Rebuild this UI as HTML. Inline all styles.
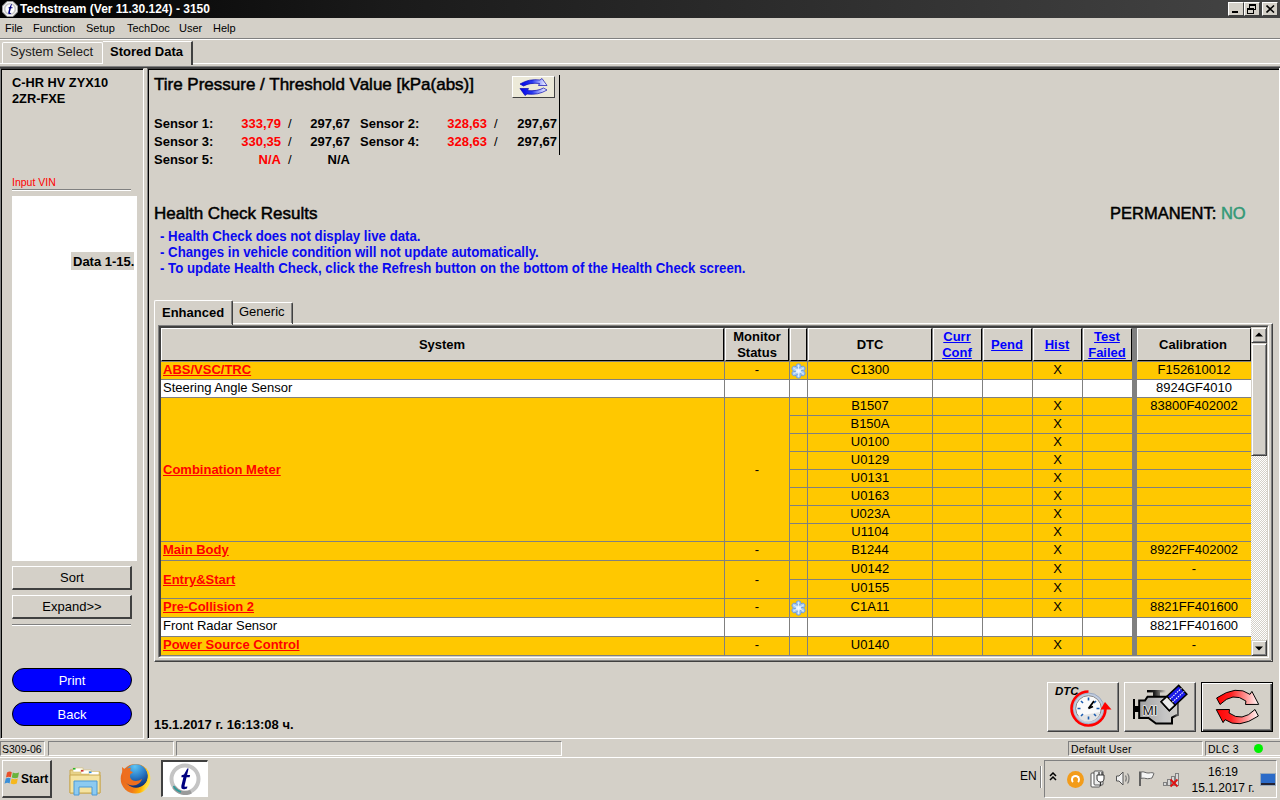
<!DOCTYPE html>
<html><head><meta charset="utf-8">
<style>
*{margin:0;padding:0;box-sizing:border-box}
html,body{width:1280px;height:800px;overflow:hidden;background:#d4d0c8;font-family:"Liberation Sans",sans-serif;color:#000}
.a{position:absolute}
.t{position:absolute;white-space:nowrap;line-height:1}
.b{font-weight:bold}
.hl{position:absolute;height:1px}
.vl{position:absolute;width:1px}
</style></head><body>
<!-- title bar -->
<div class="a" style="left:0;top:0;width:1280px;height:18px;background:linear-gradient(to right,#000 0%,#1a1a1a 30%,#444 100%)"></div>
<svg class="a" style="left:2px;top:1px" width="16" height="16" viewBox="0 0 16 16">
<path d="M5 0.5H11L15.5 5V11L11 15.5H5L0.5 11V5Z" fill="#f4f4f4" stroke="#9a9a9a" stroke-width="1"/>
<circle cx="8" cy="8" r="5.3" fill="#fff" stroke="#c8c8c8" stroke-width="1.6"/>
<path d="M9.3 3L7.7 6L6.5 6.4L6.4 7.3H7.3L6.3 11.2C6 12.7 6.7 13.2 7.8 13.1L9 12.8L9.2 11.7L8.4 11.9C7.9 12 7.8 11.7 7.9 11.2L8.9 7.3H10.4L10.6 6.2H9.1L9.9 3Z" fill="#000080"/>
</svg>
<div class="t b" style="left:20px;top:3px;font-size:12px;color:#fff">Techstream (Ver 11.30.124) - 3150</div>
<div class="a" style="left:1228px;top:2px;width:16px;height:14px;background:#d4d0c8;border-top:1px solid #fff;border-left:1px solid #fff;border-right:1px solid #404040;border-bottom:1px solid #404040"><div class="a" style="left:3px;top:8px;width:6px;height:2px;background:#000"></div></div>
<div class="a" style="left:1244px;top:2px;width:16px;height:14px;background:#d4d0c8;border-top:1px solid #fff;border-left:1px solid #fff;border-right:1px solid #404040;border-bottom:1px solid #404040"><div class="a" style="left:4px;top:1px;width:7px;height:6px;border:1px solid #000;border-top-width:2px"></div><div class="a" style="left:2px;top:5px;width:7px;height:6px;border:1px solid #000;border-top-width:2px;background:#d4d0c8"></div></div>
<div class="a" style="left:1262px;top:2px;width:16px;height:14px;background:#d4d0c8;border-top:1px solid #fff;border-left:1px solid #fff;border-right:1px solid #404040;border-bottom:1px solid #404040"><svg class="a" style="left:3px;top:2px" width="9" height="8"><path d="M0.5 0.5L8 7.5M8 0.5L0.5 7.5" stroke="#000" stroke-width="1.6"/></svg></div>
<!-- menu -->
<div class="t" style="left:5px;top:23px;font-size:11px">File</div>
<div class="t" style="left:33px;top:23px;font-size:11px">Function</div>
<div class="t" style="left:86px;top:23px;font-size:11px">Setup</div>
<div class="t" style="left:127px;top:23px;font-size:11px">TechDoc</div>
<div class="t" style="left:179px;top:23px;font-size:11px">User</div>
<div class="t" style="left:213px;top:23px;font-size:11px">Help</div>
<div class="hl" style="left:0;top:38px;width:1280px;background:#808080"></div>
<div class="hl" style="left:0;top:39px;width:1280px;background:#fff"></div>
<!-- top tabs -->
<div class="a" style="left:2px;top:42px;width:101px;height:22px;border-top:1px solid #fff;border-left:1px solid #fff;border-right:1px solid #fff;border-radius:2px 2px 0 0"></div>
<div class="t" style="left:10px;top:45px;font-size:13px;color:#202020">System Select</div>
<div class="a" style="left:103px;top:41px;width:90px;height:24px;border-top:1px solid #fff;border-right:2px solid #404040;background:#d4d0c8"></div>
<div class="t b" style="left:110px;top:45px;font-size:13px">Stored Data</div>
<div class="hl" style="left:0;top:63px;width:103px;background:#fff"></div>
<div class="hl" style="left:193px;top:63px;width:1087px;background:#fff"></div>
<div class="hl" style="left:0;top:66px;width:1280px;background:#808080"></div>
<div class="hl" style="left:0;top:67px;width:1280px;background:#404040"></div>
<!-- left panel -->
<div class="a" style="left:0;top:68px;width:144px;height:671px;border-left:1px solid #808080;border-top:1px solid #404040;border-right:1px solid #fff;border-bottom:1px solid #fff"></div><div class="a" style="left:1px;top:69px;width:142px;height:669px;border-left:1px solid #000;border-top:1px solid #000"></div>
<div class="t b" style="left:12px;top:77px;font-size:12.8px">C-HR HV ZYX10</div>
<div class="t b" style="left:12px;top:93px;font-size:12.8px">2ZR-FXE</div>
<div class="t" style="left:12px;top:177px;font-size:10.5px;color:#f00">Input VIN</div>
<div class="hl" style="left:12px;top:189px;width:119px;background:#808080"></div>
<div class="hl" style="left:12px;top:190px;width:119px;background:#fff"></div>
<div class="a" style="left:12px;top:196px;width:125px;height:365px;background:#fff"></div>
<div class="a" style="left:71px;top:252px;width:63px;height:18px;background:#d4d0c8"></div>
<div class="t b" style="left:73px;top:255px;font-size:13px">Data 1-15.</div>
<div class="a" style="left:12px;top:566px;width:120px;height:24px;border-top:1px solid #fff;border-left:1px solid #fff;border-right:2px solid #404040;border-bottom:2px solid #404040"></div>
<div class="t" style="left:12px;top:571px;width:120px;text-align:center;font-size:13px">Sort</div>
<div class="a" style="left:12px;top:595px;width:120px;height:24px;border-top:1px solid #fff;border-left:1px solid #fff;border-right:2px solid #404040;border-bottom:2px solid #404040"></div>
<div class="t" style="left:12px;top:600px;width:120px;text-align:center;font-size:13px">Expand&gt;&gt;</div>
<div class="hl" style="left:12px;top:624px;width:119px;background:#808080"></div>
<div class="hl" style="left:12px;top:625px;width:119px;background:#fff"></div>
<div class="a" style="left:12px;top:668px;width:120px;height:24px;background:#0000ff;border:1px solid #000;border-radius:12px"></div>
<div class="t" style="left:12px;top:674px;width:120px;text-align:center;font-size:13px;color:#fff">Print</div>
<div class="a" style="left:12px;top:702px;width:120px;height:24px;background:#0000ff;border:1px solid #000;border-radius:12px"></div>
<div class="t" style="left:12px;top:708px;width:120px;text-align:center;font-size:13px;color:#fff">Back</div>
<!-- main panel -->
<div class="a" style="left:147px;top:68px;width:1133px;height:671px;border-left:1px solid #808080;border-top:1px solid #404040;border-bottom:1px solid #fff"></div><div class="a" style="left:148px;top:69px;width:1131px;height:669px;border-left:1px solid #000;border-top:1px solid #000"></div>
<div class="vl" style="left:1279px;top:68px;height:671px;background:#fff"></div>

<div class="t" style="left:154px;top:76px;font-size:17px;-webkit-text-stroke:0.5px #000">Tire Pressure / Threshold Value [kPa(abs)]</div>
<div class="a" style="left:512px;top:76px;width:43px;height:22px;background:#ece9d8;border-top:1px solid #fff;border-left:1px solid #fff;border-right:1px solid #404040;border-bottom:1px solid #404040"></div>
<svg class="a" style="left:515px;top:76px" width="38" height="22" viewBox="515 76 38 22">
<defs><linearGradient id="bg1" x1="520" y1="0" x2="547" y2="0" gradientUnits="userSpaceOnUse"><stop offset="0" stop-color="#0000e8"/><stop offset="0.45" stop-color="#2838f0"/><stop offset="0.75" stop-color="#a8b0ff"/><stop offset="1" stop-color="#fff"/></linearGradient>
<linearGradient id="bg2" x1="520" y1="0" x2="547" y2="0" gradientUnits="userSpaceOnUse"><stop offset="0" stop-color="#fff"/><stop offset="0.25" stop-color="#a8b0ff"/><stop offset="0.55" stop-color="#2838f0"/><stop offset="1" stop-color="#0000e8"/></linearGradient></defs>
<path d="M520 84Q529 78.5 540 80L542 78.5L547 85.5L538.5 85.5L539.5 83.5Q530 82.5 523.5 86Z" fill="url(#bg1)" stroke="#0a0ab0" stroke-width="0.7"/>
<g transform="rotate(180 533.5 87)"><path d="M520 84Q529 78.5 540 80L542 78.5L547 85.5L538.5 85.5L539.5 83.5Q530 82.5 523.5 86Z" fill="url(#bg2)" stroke="#0a0ab0" stroke-width="0.7"/></g>
</svg>
<div class="vl" style="left:559px;top:75px;height:80px;background:#000"></div>
<div class="t b" style="left:154px;top:117px;font-size:13px">Sensor 1:</div>
<div class="t b" style="left:154px;top:135px;font-size:13px">Sensor 3:</div>
<div class="t b" style="left:154px;top:153px;font-size:13px">Sensor 5:</div>
<div class="t b" style="left:201px;width:80px;text-align:right;top:117px;font-size:13px;color:#f00">333,79</div>
<div class="t b" style="left:201px;width:80px;text-align:right;top:135px;font-size:13px;color:#f00">330,35</div>
<div class="t b" style="left:201px;width:80px;text-align:right;top:153px;font-size:13px;color:#f00">N/A</div>
<div class="t" style="left:288px;top:117px;font-size:13px">/</div>
<div class="t" style="left:288px;top:135px;font-size:13px">/</div>
<div class="t" style="left:288px;top:153px;font-size:13px">/</div>
<div class="t b" style="left:270px;width:80px;text-align:right;top:117px;font-size:13px">297,67</div>
<div class="t b" style="left:270px;width:80px;text-align:right;top:135px;font-size:13px">297,67</div>
<div class="t b" style="left:270px;width:80px;text-align:right;top:153px;font-size:13px">N/A</div>
<div class="t b" style="left:360px;top:117px;font-size:13px">Sensor 2:</div>
<div class="t b" style="left:360px;top:135px;font-size:13px">Sensor 4:</div>
<div class="t b" style="left:407px;width:80px;text-align:right;top:117px;font-size:13px;color:#f00">328,63</div>
<div class="t b" style="left:407px;width:80px;text-align:right;top:135px;font-size:13px;color:#f00">328,63</div>
<div class="t" style="left:494px;top:117px;font-size:13px">/</div>
<div class="t" style="left:494px;top:135px;font-size:13px">/</div>
<div class="t b" style="left:477px;width:80px;text-align:right;top:117px;font-size:13px">297,67</div>
<div class="t b" style="left:477px;width:80px;text-align:right;top:135px;font-size:13px">297,67</div>
<div class="t" style="left:154px;top:205px;font-size:17px;-webkit-text-stroke:0.5px #000">Health Check Results</div>
<div class="t" style="left:1110px;top:205px;font-size:16.5px;-webkit-text-stroke:0.5px #000">PERMANENT: <span style="color:#339977;-webkit-text-stroke:0.5px #339977">NO</span></div>
<div class="t b" style="left:160px;top:228px;font-size:15px;color:#0a0af0;transform:scaleX(0.883);transform-origin:0 0">- Health Check does not display live data.</div>
<div class="t b" style="left:160px;top:244px;font-size:15px;color:#0a0af0;transform:scaleX(0.883);transform-origin:0 0">- Changes in vehicle condition will not update automatically.</div>
<div class="t b" style="left:160px;top:260px;font-size:15px;color:#0a0af0;transform:scaleX(0.883);transform-origin:0 0">- To update Health Check, click the Refresh button on the bottom of the Health Check screen.</div>
<!--TABLE-->
<div class="a" style="left:154px;top:323px;width:1119px;height:339px;border-left:1px solid #fff;border-top:1px solid #fff;border-right:1px solid #404040;border-bottom:1px solid #404040"></div>
<div class="vl" style="left:1271px;top:324px;height:336px;background:#808080"></div>
<div class="hl" style="left:155px;top:660px;width:1116px;background:#808080"></div>
<div class="a" style="left:154px;top:300px;width:79px;height:25px;background:#d4d0c8;border-left:1px solid #fff;border-top:1px solid #fff;border-right:1px solid #404040;border-radius:2px 2px 0 0"></div>
<div class="vl" style="left:231px;top:301px;height:23px;background:#808080"></div>
<div class="t b" style="left:162px;top:306px;font-size:13px">Enhanced</div>
<div class="a" style="left:233px;top:302px;width:60px;height:22px;border-top:1px solid #fff;border-right:1px solid #404040;border-radius:0 2px 0 0"></div>
<div class="vl" style="left:291px;top:303px;height:20px;background:#808080"></div>
<div class="t" style="left:239px;top:305px;font-size:13px">Generic</div>
<div class="a" style="left:158px;top:325px;width:1111px;height:333px;border-left:1px solid #808080;border-top:1px solid #808080;border-right:1px solid #fff;border-bottom:1px solid #fff"></div>
<div class="a" style="left:159px;top:326px;width:1109px;height:331px;border-left:2px solid #404040;border-top:2px solid #404040;border-right:1px solid #d4d0c8;border-bottom:1px solid #d4d0c8"></div>
<div class="a" style="left:161px;top:328px;width:1090px;height:328px;background:#808080"></div>
<div class="a" style="left:161px;top:328px;width:563px;height:33px;background:#d4d0c8;border-left:1px solid #fff;border-top:1px solid #fff;border-right:1px solid #000;border-bottom:1px solid #000"></div>
<div class="a" style="left:725px;top:328px;width:64px;height:33px;background:#d4d0c8;border-left:1px solid #fff;border-top:1px solid #fff;border-right:1px solid #000;border-bottom:1px solid #000"></div>
<div class="a" style="left:790px;top:328px;width:17px;height:33px;background:#d4d0c8;border-left:1px solid #fff;border-top:1px solid #fff;border-right:1px solid #000;border-bottom:1px solid #000"></div>
<div class="a" style="left:808px;top:328px;width:124px;height:33px;background:#d4d0c8;border-left:1px solid #fff;border-top:1px solid #fff;border-right:1px solid #000;border-bottom:1px solid #000"></div>
<div class="a" style="left:933px;top:328px;width:49px;height:33px;background:#d4d0c8;border-left:1px solid #fff;border-top:1px solid #fff;border-right:1px solid #000;border-bottom:1px solid #000"></div>
<div class="a" style="left:983px;top:328px;width:49px;height:33px;background:#d4d0c8;border-left:1px solid #fff;border-top:1px solid #fff;border-right:1px solid #000;border-bottom:1px solid #000"></div>
<div class="a" style="left:1033px;top:328px;width:49px;height:33px;background:#d4d0c8;border-left:1px solid #fff;border-top:1px solid #fff;border-right:1px solid #000;border-bottom:1px solid #000"></div>
<div class="a" style="left:1083px;top:328px;width:49px;height:33px;background:#d4d0c8;border-left:1px solid #fff;border-top:1px solid #fff;border-right:1px solid #000;border-bottom:1px solid #000"></div>
<div class="a" style="left:1137px;top:328px;width:114px;height:33px;background:#d4d0c8;border-left:1px solid #fff;border-top:1px solid #fff;border-right:1px solid #000;border-bottom:1px solid #000"></div>
<div class="a" style="left:1132px;top:328px;width:4px;height:327px;background:#808080"></div>
<div class="t b" style="left:382px;width:120px;text-align:center;top:338px;font-size:13px;">System</div>
<div class="t b" style="left:697px;width:120px;text-align:center;top:330px;font-size:13px;">Monitor</div>
<div class="t b" style="left:697px;width:120px;text-align:center;top:346px;font-size:13px;">Status</div>
<div class="t b" style="left:810px;width:120px;text-align:center;top:338px;font-size:13px;">DTC</div>
<div class="t b" style="left:897px;width:120px;text-align:center;top:330px;font-size:13px;color:#0000ff;text-decoration:underline;">Curr</div>
<div class="t b" style="left:897px;width:120px;text-align:center;top:346px;font-size:13px;color:#0000ff;text-decoration:underline;">Conf</div>
<div class="t b" style="left:947px;width:120px;text-align:center;top:338px;font-size:13px;color:#0000ff;text-decoration:underline;">Pend</div>
<div class="t b" style="left:997px;width:120px;text-align:center;top:338px;font-size:13px;color:#0000ff;text-decoration:underline;">Hist</div>
<div class="t b" style="left:1047px;width:120px;text-align:center;top:330px;font-size:13px;color:#0000ff;text-decoration:underline;">Test</div>
<div class="t b" style="left:1047px;width:120px;text-align:center;top:346px;font-size:13px;color:#0000ff;text-decoration:underline;">Failed</div>
<div class="t b" style="left:1133px;width:120px;text-align:center;top:338px;font-size:13px;">Calibration</div>
<div class="a" style="left:161px;top:362px;width:563px;height:17px;background:#ffc800"></div>
<div class="a" style="left:725px;top:362px;width:64px;height:17px;background:#ffc800"></div>
<div class="t b" style="left:163px;top:363px;font-size:13px;color:#f00;text-decoration:underline">ABS/VSC/TRC</div>
<div class="t" style="left:725px;width:64px;text-align:center;top:363px;font-size:13px">-</div>
<div class="a" style="left:161px;top:380px;width:563px;height:17px;background:#ffffff"></div>
<div class="a" style="left:725px;top:380px;width:64px;height:17px;background:#ffffff"></div>
<div class="t" style="left:163px;top:381px;font-size:13px">Steering Angle Sensor</div>
<div class="a" style="left:161px;top:398px;width:563px;height:143px;background:#ffc800"></div>
<div class="a" style="left:725px;top:398px;width:64px;height:143px;background:#ffc800"></div>
<div class="t b" style="left:163px;top:463px;font-size:13px;color:#f00;text-decoration:underline">Combination Meter</div>
<div class="t" style="left:725px;width:64px;text-align:center;top:463px;font-size:13px">-</div>
<div class="a" style="left:161px;top:542px;width:563px;height:18px;background:#ffc800"></div>
<div class="a" style="left:725px;top:542px;width:64px;height:18px;background:#ffc800"></div>
<div class="t b" style="left:163px;top:543px;font-size:13px;color:#f00;text-decoration:underline">Main Body</div>
<div class="t" style="left:725px;width:64px;text-align:center;top:543px;font-size:13px">-</div>
<div class="a" style="left:161px;top:561px;width:563px;height:37px;background:#ffc800"></div>
<div class="a" style="left:725px;top:561px;width:64px;height:37px;background:#ffc800"></div>
<div class="t b" style="left:163px;top:573px;font-size:13px;color:#f00;text-decoration:underline">Entry&amp;Start</div>
<div class="t" style="left:725px;width:64px;text-align:center;top:573px;font-size:13px">-</div>
<div class="a" style="left:161px;top:599px;width:563px;height:18px;background:#ffc800"></div>
<div class="a" style="left:725px;top:599px;width:64px;height:18px;background:#ffc800"></div>
<div class="t b" style="left:163px;top:600px;font-size:13px;color:#f00;text-decoration:underline">Pre-Collision 2</div>
<div class="t" style="left:725px;width:64px;text-align:center;top:600px;font-size:13px">-</div>
<div class="a" style="left:161px;top:618px;width:563px;height:18px;background:#ffffff"></div>
<div class="a" style="left:725px;top:618px;width:64px;height:18px;background:#ffffff"></div>
<div class="t" style="left:163px;top:619px;font-size:13px">Front Radar Sensor</div>
<div class="a" style="left:161px;top:637px;width:563px;height:18px;background:#ffc800"></div>
<div class="a" style="left:725px;top:637px;width:64px;height:18px;background:#ffc800"></div>
<div class="t b" style="left:163px;top:638px;font-size:13px;color:#f00;text-decoration:underline">Power Source Control</div>
<div class="t" style="left:725px;width:64px;text-align:center;top:638px;font-size:13px">-</div>
<div class="a" style="left:790px;top:362px;width:17px;height:17px;background:#ffc800"></div>
<div class="a" style="left:808px;top:362px;width:124px;height:17px;background:#ffc800"></div>
<div class="a" style="left:933px;top:362px;width:49px;height:17px;background:#ffc800"></div>
<div class="a" style="left:983px;top:362px;width:49px;height:17px;background:#ffc800"></div>
<div class="a" style="left:1033px;top:362px;width:49px;height:17px;background:#ffc800"></div>
<div class="a" style="left:1083px;top:362px;width:49px;height:17px;background:#ffc800"></div>
<div class="a" style="left:1137px;top:362px;width:114px;height:17px;background:#ffc800"></div>
<div class="t" style="left:808px;width:124px;text-align:center;top:363px;font-size:13px">C1300</div>
<div class="t" style="left:1033px;width:49px;text-align:center;top:363px;font-size:13px">X</div>
<div class="t" style="left:1137px;width:114px;text-align:center;top:363px;font-size:13px">F152610012</div>
<svg class="a" style="left:790px;top:363px" width="17" height="16" viewBox="0 0 17 16"><g fill="#a8cdf4" stroke="#6a96d8" stroke-width="0.8"><ellipse cx="8.5" cy="4" rx="2.6" ry="3.3" transform="rotate(0 8.5 8)"/><ellipse cx="8.5" cy="4" rx="2.6" ry="3.3" transform="rotate(60 8.5 8)"/><ellipse cx="8.5" cy="4" rx="2.6" ry="3.3" transform="rotate(120 8.5 8)"/><ellipse cx="8.5" cy="4" rx="2.6" ry="3.3" transform="rotate(180 8.5 8)"/><ellipse cx="8.5" cy="4" rx="2.6" ry="3.3" transform="rotate(240 8.5 8)"/><ellipse cx="8.5" cy="4" rx="2.6" ry="3.3" transform="rotate(300 8.5 8)"/></g><circle cx="8.5" cy="8" r="2.6" fill="#d8ecff"/><g stroke="#fff" stroke-width="0.8" opacity="0.8"><path d="M8.5 2V14M3.3 5L13.7 11M3.3 11L13.7 5"/></g></svg>
<div class="a" style="left:790px;top:380px;width:17px;height:17px;background:#ffffff"></div>
<div class="a" style="left:808px;top:380px;width:124px;height:17px;background:#ffffff"></div>
<div class="a" style="left:933px;top:380px;width:49px;height:17px;background:#ffffff"></div>
<div class="a" style="left:983px;top:380px;width:49px;height:17px;background:#ffffff"></div>
<div class="a" style="left:1033px;top:380px;width:49px;height:17px;background:#ffffff"></div>
<div class="a" style="left:1083px;top:380px;width:49px;height:17px;background:#ffffff"></div>
<div class="a" style="left:1137px;top:380px;width:114px;height:17px;background:#ffffff"></div>
<div class="t" style="left:1137px;width:114px;text-align:center;top:381px;font-size:13px">8924GF4010</div>
<div class="a" style="left:790px;top:398px;width:17px;height:17px;background:#ffc800"></div>
<div class="a" style="left:808px;top:398px;width:124px;height:17px;background:#ffc800"></div>
<div class="a" style="left:933px;top:398px;width:49px;height:17px;background:#ffc800"></div>
<div class="a" style="left:983px;top:398px;width:49px;height:17px;background:#ffc800"></div>
<div class="a" style="left:1033px;top:398px;width:49px;height:17px;background:#ffc800"></div>
<div class="a" style="left:1083px;top:398px;width:49px;height:17px;background:#ffc800"></div>
<div class="a" style="left:1137px;top:398px;width:114px;height:17px;background:#ffc800"></div>
<div class="t" style="left:808px;width:124px;text-align:center;top:399px;font-size:13px">B1507</div>
<div class="t" style="left:1033px;width:49px;text-align:center;top:399px;font-size:13px">X</div>
<div class="t" style="left:1137px;width:114px;text-align:center;top:399px;font-size:13px">83800F402002</div>
<div class="a" style="left:790px;top:416px;width:17px;height:17px;background:#ffc800"></div>
<div class="a" style="left:808px;top:416px;width:124px;height:17px;background:#ffc800"></div>
<div class="a" style="left:933px;top:416px;width:49px;height:17px;background:#ffc800"></div>
<div class="a" style="left:983px;top:416px;width:49px;height:17px;background:#ffc800"></div>
<div class="a" style="left:1033px;top:416px;width:49px;height:17px;background:#ffc800"></div>
<div class="a" style="left:1083px;top:416px;width:49px;height:17px;background:#ffc800"></div>
<div class="a" style="left:1137px;top:416px;width:114px;height:17px;background:#ffc800"></div>
<div class="t" style="left:808px;width:124px;text-align:center;top:417px;font-size:13px">B150A</div>
<div class="t" style="left:1033px;width:49px;text-align:center;top:417px;font-size:13px">X</div>
<div class="a" style="left:790px;top:434px;width:17px;height:17px;background:#ffc800"></div>
<div class="a" style="left:808px;top:434px;width:124px;height:17px;background:#ffc800"></div>
<div class="a" style="left:933px;top:434px;width:49px;height:17px;background:#ffc800"></div>
<div class="a" style="left:983px;top:434px;width:49px;height:17px;background:#ffc800"></div>
<div class="a" style="left:1033px;top:434px;width:49px;height:17px;background:#ffc800"></div>
<div class="a" style="left:1083px;top:434px;width:49px;height:17px;background:#ffc800"></div>
<div class="a" style="left:1137px;top:434px;width:114px;height:17px;background:#ffc800"></div>
<div class="t" style="left:808px;width:124px;text-align:center;top:435px;font-size:13px">U0100</div>
<div class="t" style="left:1033px;width:49px;text-align:center;top:435px;font-size:13px">X</div>
<div class="a" style="left:790px;top:452px;width:17px;height:17px;background:#ffc800"></div>
<div class="a" style="left:808px;top:452px;width:124px;height:17px;background:#ffc800"></div>
<div class="a" style="left:933px;top:452px;width:49px;height:17px;background:#ffc800"></div>
<div class="a" style="left:983px;top:452px;width:49px;height:17px;background:#ffc800"></div>
<div class="a" style="left:1033px;top:452px;width:49px;height:17px;background:#ffc800"></div>
<div class="a" style="left:1083px;top:452px;width:49px;height:17px;background:#ffc800"></div>
<div class="a" style="left:1137px;top:452px;width:114px;height:17px;background:#ffc800"></div>
<div class="t" style="left:808px;width:124px;text-align:center;top:453px;font-size:13px">U0129</div>
<div class="t" style="left:1033px;width:49px;text-align:center;top:453px;font-size:13px">X</div>
<div class="a" style="left:790px;top:470px;width:17px;height:17px;background:#ffc800"></div>
<div class="a" style="left:808px;top:470px;width:124px;height:17px;background:#ffc800"></div>
<div class="a" style="left:933px;top:470px;width:49px;height:17px;background:#ffc800"></div>
<div class="a" style="left:983px;top:470px;width:49px;height:17px;background:#ffc800"></div>
<div class="a" style="left:1033px;top:470px;width:49px;height:17px;background:#ffc800"></div>
<div class="a" style="left:1083px;top:470px;width:49px;height:17px;background:#ffc800"></div>
<div class="a" style="left:1137px;top:470px;width:114px;height:17px;background:#ffc800"></div>
<div class="t" style="left:808px;width:124px;text-align:center;top:471px;font-size:13px">U0131</div>
<div class="t" style="left:1033px;width:49px;text-align:center;top:471px;font-size:13px">X</div>
<div class="a" style="left:790px;top:488px;width:17px;height:17px;background:#ffc800"></div>
<div class="a" style="left:808px;top:488px;width:124px;height:17px;background:#ffc800"></div>
<div class="a" style="left:933px;top:488px;width:49px;height:17px;background:#ffc800"></div>
<div class="a" style="left:983px;top:488px;width:49px;height:17px;background:#ffc800"></div>
<div class="a" style="left:1033px;top:488px;width:49px;height:17px;background:#ffc800"></div>
<div class="a" style="left:1083px;top:488px;width:49px;height:17px;background:#ffc800"></div>
<div class="a" style="left:1137px;top:488px;width:114px;height:17px;background:#ffc800"></div>
<div class="t" style="left:808px;width:124px;text-align:center;top:489px;font-size:13px">U0163</div>
<div class="t" style="left:1033px;width:49px;text-align:center;top:489px;font-size:13px">X</div>
<div class="a" style="left:790px;top:506px;width:17px;height:17px;background:#ffc800"></div>
<div class="a" style="left:808px;top:506px;width:124px;height:17px;background:#ffc800"></div>
<div class="a" style="left:933px;top:506px;width:49px;height:17px;background:#ffc800"></div>
<div class="a" style="left:983px;top:506px;width:49px;height:17px;background:#ffc800"></div>
<div class="a" style="left:1033px;top:506px;width:49px;height:17px;background:#ffc800"></div>
<div class="a" style="left:1083px;top:506px;width:49px;height:17px;background:#ffc800"></div>
<div class="a" style="left:1137px;top:506px;width:114px;height:17px;background:#ffc800"></div>
<div class="t" style="left:808px;width:124px;text-align:center;top:507px;font-size:13px">U023A</div>
<div class="t" style="left:1033px;width:49px;text-align:center;top:507px;font-size:13px">X</div>
<div class="a" style="left:790px;top:524px;width:17px;height:17px;background:#ffc800"></div>
<div class="a" style="left:808px;top:524px;width:124px;height:17px;background:#ffc800"></div>
<div class="a" style="left:933px;top:524px;width:49px;height:17px;background:#ffc800"></div>
<div class="a" style="left:983px;top:524px;width:49px;height:17px;background:#ffc800"></div>
<div class="a" style="left:1033px;top:524px;width:49px;height:17px;background:#ffc800"></div>
<div class="a" style="left:1083px;top:524px;width:49px;height:17px;background:#ffc800"></div>
<div class="a" style="left:1137px;top:524px;width:114px;height:17px;background:#ffc800"></div>
<div class="t" style="left:808px;width:124px;text-align:center;top:525px;font-size:13px">U1104</div>
<div class="t" style="left:1033px;width:49px;text-align:center;top:525px;font-size:13px">X</div>
<div class="a" style="left:790px;top:542px;width:17px;height:18px;background:#ffc800"></div>
<div class="a" style="left:808px;top:542px;width:124px;height:18px;background:#ffc800"></div>
<div class="a" style="left:933px;top:542px;width:49px;height:18px;background:#ffc800"></div>
<div class="a" style="left:983px;top:542px;width:49px;height:18px;background:#ffc800"></div>
<div class="a" style="left:1033px;top:542px;width:49px;height:18px;background:#ffc800"></div>
<div class="a" style="left:1083px;top:542px;width:49px;height:18px;background:#ffc800"></div>
<div class="a" style="left:1137px;top:542px;width:114px;height:18px;background:#ffc800"></div>
<div class="t" style="left:808px;width:124px;text-align:center;top:543px;font-size:13px">B1244</div>
<div class="t" style="left:1033px;width:49px;text-align:center;top:543px;font-size:13px">X</div>
<div class="t" style="left:1137px;width:114px;text-align:center;top:543px;font-size:13px">8922FF402002</div>
<div class="a" style="left:790px;top:561px;width:17px;height:18px;background:#ffc800"></div>
<div class="a" style="left:808px;top:561px;width:124px;height:18px;background:#ffc800"></div>
<div class="a" style="left:933px;top:561px;width:49px;height:18px;background:#ffc800"></div>
<div class="a" style="left:983px;top:561px;width:49px;height:18px;background:#ffc800"></div>
<div class="a" style="left:1033px;top:561px;width:49px;height:18px;background:#ffc800"></div>
<div class="a" style="left:1083px;top:561px;width:49px;height:18px;background:#ffc800"></div>
<div class="a" style="left:1137px;top:561px;width:114px;height:18px;background:#ffc800"></div>
<div class="t" style="left:808px;width:124px;text-align:center;top:562px;font-size:13px">U0142</div>
<div class="t" style="left:1033px;width:49px;text-align:center;top:562px;font-size:13px">X</div>
<div class="t" style="left:1137px;width:114px;text-align:center;top:562px;font-size:13px">-</div>
<div class="a" style="left:790px;top:580px;width:17px;height:18px;background:#ffc800"></div>
<div class="a" style="left:808px;top:580px;width:124px;height:18px;background:#ffc800"></div>
<div class="a" style="left:933px;top:580px;width:49px;height:18px;background:#ffc800"></div>
<div class="a" style="left:983px;top:580px;width:49px;height:18px;background:#ffc800"></div>
<div class="a" style="left:1033px;top:580px;width:49px;height:18px;background:#ffc800"></div>
<div class="a" style="left:1083px;top:580px;width:49px;height:18px;background:#ffc800"></div>
<div class="a" style="left:1137px;top:580px;width:114px;height:18px;background:#ffc800"></div>
<div class="t" style="left:808px;width:124px;text-align:center;top:581px;font-size:13px">U0155</div>
<div class="t" style="left:1033px;width:49px;text-align:center;top:581px;font-size:13px">X</div>
<div class="a" style="left:790px;top:599px;width:17px;height:18px;background:#ffc800"></div>
<div class="a" style="left:808px;top:599px;width:124px;height:18px;background:#ffc800"></div>
<div class="a" style="left:933px;top:599px;width:49px;height:18px;background:#ffc800"></div>
<div class="a" style="left:983px;top:599px;width:49px;height:18px;background:#ffc800"></div>
<div class="a" style="left:1033px;top:599px;width:49px;height:18px;background:#ffc800"></div>
<div class="a" style="left:1083px;top:599px;width:49px;height:18px;background:#ffc800"></div>
<div class="a" style="left:1137px;top:599px;width:114px;height:18px;background:#ffc800"></div>
<div class="t" style="left:808px;width:124px;text-align:center;top:600px;font-size:13px">C1A11</div>
<div class="t" style="left:1033px;width:49px;text-align:center;top:600px;font-size:13px">X</div>
<div class="t" style="left:1137px;width:114px;text-align:center;top:600px;font-size:13px">8821FF401600</div>
<svg class="a" style="left:790px;top:600px" width="17" height="16" viewBox="0 0 17 16"><g fill="#a8cdf4" stroke="#6a96d8" stroke-width="0.8"><ellipse cx="8.5" cy="4" rx="2.6" ry="3.3" transform="rotate(0 8.5 8)"/><ellipse cx="8.5" cy="4" rx="2.6" ry="3.3" transform="rotate(60 8.5 8)"/><ellipse cx="8.5" cy="4" rx="2.6" ry="3.3" transform="rotate(120 8.5 8)"/><ellipse cx="8.5" cy="4" rx="2.6" ry="3.3" transform="rotate(180 8.5 8)"/><ellipse cx="8.5" cy="4" rx="2.6" ry="3.3" transform="rotate(240 8.5 8)"/><ellipse cx="8.5" cy="4" rx="2.6" ry="3.3" transform="rotate(300 8.5 8)"/></g><circle cx="8.5" cy="8" r="2.6" fill="#d8ecff"/><g stroke="#fff" stroke-width="0.8" opacity="0.8"><path d="M8.5 2V14M3.3 5L13.7 11M3.3 11L13.7 5"/></g></svg>
<div class="a" style="left:790px;top:618px;width:17px;height:18px;background:#ffffff"></div>
<div class="a" style="left:808px;top:618px;width:124px;height:18px;background:#ffffff"></div>
<div class="a" style="left:933px;top:618px;width:49px;height:18px;background:#ffffff"></div>
<div class="a" style="left:983px;top:618px;width:49px;height:18px;background:#ffffff"></div>
<div class="a" style="left:1033px;top:618px;width:49px;height:18px;background:#ffffff"></div>
<div class="a" style="left:1083px;top:618px;width:49px;height:18px;background:#ffffff"></div>
<div class="a" style="left:1137px;top:618px;width:114px;height:18px;background:#ffffff"></div>
<div class="t" style="left:1137px;width:114px;text-align:center;top:619px;font-size:13px">8821FF401600</div>
<div class="a" style="left:790px;top:637px;width:17px;height:18px;background:#ffc800"></div>
<div class="a" style="left:808px;top:637px;width:124px;height:18px;background:#ffc800"></div>
<div class="a" style="left:933px;top:637px;width:49px;height:18px;background:#ffc800"></div>
<div class="a" style="left:983px;top:637px;width:49px;height:18px;background:#ffc800"></div>
<div class="a" style="left:1033px;top:637px;width:49px;height:18px;background:#ffc800"></div>
<div class="a" style="left:1083px;top:637px;width:49px;height:18px;background:#ffc800"></div>
<div class="a" style="left:1137px;top:637px;width:114px;height:18px;background:#ffc800"></div>
<div class="t" style="left:808px;width:124px;text-align:center;top:638px;font-size:13px">U0140</div>
<div class="t" style="left:1033px;width:49px;text-align:center;top:638px;font-size:13px">X</div>
<div class="t" style="left:1137px;width:114px;text-align:center;top:638px;font-size:13px">-</div>
<div class="a" style="left:1251px;top:328px;width:16px;height:328px;background-color:#e8e6e0;background-image:repeating-conic-gradient(#fff 0 25%,#d4d0c8 0 50%);background-size:2px 2px"></div>
<div class="a" style="left:1251px;top:327px;width:16px;height:16px;background:#d4d0c8;border-top:1px solid #d4d0c8;border-left:1px solid #d4d0c8;border-right:1px solid #404040;border-bottom:1px solid #404040;box-shadow:inset 1px 1px 0 #fff,inset -1px -1px 0 #808080"></div>
<svg class="a" style="left:1255px;top:332px" width="8" height="5"><path d="M0 4.5L4 0.5L8 4.5Z" fill="#000"/></svg>
<div class="a" style="left:1251px;top:343px;width:16px;height:113px;background:#d4d0c8;border-top:1px solid #d4d0c8;border-left:1px solid #d4d0c8;border-right:1px solid #404040;border-bottom:1px solid #404040;box-shadow:inset 1px 1px 0 #fff,inset -1px -1px 0 #808080"></div>
<div class="a" style="left:1251px;top:640px;width:16px;height:16px;background:#d4d0c8;border-top:1px solid #d4d0c8;border-left:1px solid #d4d0c8;border-right:1px solid #404040;border-bottom:1px solid #404040;box-shadow:inset 1px 1px 0 #fff,inset -1px -1px 0 #808080"></div>
<svg class="a" style="left:1255px;top:646px" width="8" height="5"><path d="M0 0.5L4 4.5L8 0.5Z" fill="#000"/></svg>
<!--/TABLE-->
<!--BTN-->
<div class="a" style="left:1047px;top:682px;width:72px;height:50px;background:#d4d0c8;border-top:1px solid #fff;border-left:1px solid #fff;border-right:1px solid #404040;border-bottom:1px solid #404040;box-shadow:inset -1px -1px 0 #808080"></div>
<div class="t b" style="left:1055px;top:686px;font-size:11.5px;font-style:italic">DTC</div>
<svg class="a" style="left:1068px;top:688px" width="46" height="42" viewBox="1068 688 46 42">
<circle cx="1088.5" cy="708.5" r="15.5" fill="#c0cce0" stroke="#9aa8c0" stroke-width="1"/>
<circle cx="1088.5" cy="708.5" r="12.8" fill="#fafafa" stroke="#888" stroke-width="1"/>
<path d="M1078 716A12 12 0 0 0 1100 712Z" fill="#e4e4e4"/>
<g stroke="#1a5cb0" stroke-width="1.6">
<path d="M1088.5 697.5V700.5M1088.5 716.5V719.5M1077.5 708.5H1080.5M1096.5 708.5H1099.5M1081 701L1083 703M1094 714L1096 716M1096 701L1094 703M1081 716L1083 714"/>
</g>
<path d="M1088.5 708.5L1094 701M1088.5 708.5L1093 706.5" stroke="#000" stroke-width="1.8"/>
<path d="M1088.5 691.5A17 17 0 1 0 1105.5 709" fill="none" stroke="#f00" stroke-width="2.6"/>
<path d="M1100.5 709.5L1111.5 709.5L1105 702Z" fill="#f00"/>
</svg>
<div class="a" style="left:1124px;top:682px;width:72px;height:50px;background:#d4d0c8;border-top:1px solid #fff;border-left:1px solid #fff;border-right:1px solid #404040;border-bottom:1px solid #404040;box-shadow:inset -1px -1px 0 #808080"></div>
<svg class="a" style="left:1130px;top:684px" width="62" height="44" viewBox="1130 684 62 44">
<defs><linearGradient id="eg" x1="1139" y1="0" x2="1185" y2="0" gradientUnits="userSpaceOnUse"><stop offset="0" stop-color="#a0a0a0"/><stop offset="0.55" stop-color="#c4c4c4"/><stop offset="1" stop-color="#d4d0c8"/></linearGradient>
<linearGradient id="pg" x1="1147" y1="0" x2="1166" y2="0" gradientUnits="userSpaceOnUse"><stop offset="0" stop-color="#000"/><stop offset="0.4" stop-color="#222"/><stop offset="1" stop-color="#d4d0c8"/></linearGradient>
<linearGradient id="og" x1="1139" y1="0" x2="1184" y2="0" gradientUnits="userSpaceOnUse"><stop offset="0" stop-color="#000"/><stop offset="0.75" stop-color="#000"/><stop offset="1" stop-color="#bbb"/></linearGradient></defs>
<rect x="1147" y="690" width="19" height="2.4" fill="url(#pg)"/>
<rect x="1153" y="692" width="7" height="4.5" fill="url(#pg)"/>
<rect x="1133" y="699" width="2" height="20" fill="#000"/>
<rect x="1135" y="706" width="4" height="6" fill="#000"/>
<path d="M1139.2 700.5H1145L1147.5 696.8H1166L1172 700H1178V715L1176 715.5L1172 717.5V723.5H1156L1148.5 718H1139.2Z" fill="url(#eg)" stroke="url(#og)" stroke-width="2"/>
<text x="1142.5" y="714.5" font-family="Liberation Sans" font-size="13.5" fill="#111" stroke="#fff" stroke-width="1.2" paint-order="stroke">MI</text>
<g transform="translate(1 0) rotate(-43 1173 698)">
<rect x="1161" y="692" width="24" height="12" fill="#1a1ae8" stroke="#000" stroke-width="1.5"/>
<rect x="1161" y="692" width="8" height="12" fill="#eaeaea" stroke="#000" stroke-width="1.5"/>
<path d="M1169 696H1185M1169 700H1185" stroke="#fff" stroke-width="1.1" stroke-dasharray="1.5 1"/>
</g>
</svg>
<div class="a" style="left:1201px;top:682px;width:72px;height:50px;background:#d4d0c8;border:1px solid #000;box-shadow:inset 1px 1px 0 #fff,inset -1px -1px 0 #404040,inset -2px -2px 0 #808080"></div>
<svg class="a" style="left:1212px;top:686px" width="52" height="42" viewBox="1212 686 52 42">
<defs><linearGradient id="rg" x1="1216" y1="0" x2="1259" y2="0" gradientUnits="userSpaceOnUse"><stop offset="0" stop-color="#f00"/><stop offset="0.35" stop-color="#ff2020"/><stop offset="1" stop-color="#fff"/></linearGradient></defs>
<path d="M1216.6 698Q1236.7 684.4 1250 694.4L1251.9 691.4L1258.7 704.4L1245.5 704.5L1245.9 701Q1233 691.3 1220 704.5Z" fill="url(#rg)" stroke="#000" stroke-width="1"/>
<g transform="rotate(180 1237.5 707)"><defs><linearGradient id="rg2" x1="1216" y1="0" x2="1259" y2="0" gradientUnits="userSpaceOnUse"><stop offset="0" stop-color="#fff"/><stop offset="0.65" stop-color="#ff2020"/><stop offset="1" stop-color="#f00"/></linearGradient></defs>
<path d="M1216.6 698Q1236.7 684.4 1250 694.4L1251.9 691.4L1258.7 704.4L1245.5 704.5L1245.9 701Q1233 691.3 1220 704.5Z" fill="url(#rg2)" stroke="#000" stroke-width="1"/></g>
</svg>

<!--/BTN-->
<div class="t b" style="left:154px;top:718px;font-size:13px">15.1.2017 г. 16:13:08 ч.</div>

<!-- status bar -->
<div class="a" style="left:0px;top:741px;width:45px;height:15px;border-top:1px solid #808080;border-left:1px solid #808080;border-right:1px solid #fff;border-bottom:1px solid #fff"></div>
<div class="t" style="left:2px;top:744px;font-size:10.5px">S309-06</div>
<div class="a" style="left:48px;top:741px;width:126px;height:15px;border-top:1px solid #808080;border-left:1px solid #808080;border-right:1px solid #fff;border-bottom:1px solid #fff"></div>
<div class="a" style="left:176px;top:741px;width:386px;height:15px;border-top:1px solid #808080;border-left:1px solid #808080;border-right:1px solid #fff;border-bottom:1px solid #fff"></div>
<div class="a" style="left:1068px;top:741px;width:135px;height:15px;border-top:1px solid #808080;border-left:1px solid #808080;border-right:1px solid #fff;border-bottom:1px solid #fff"></div>
<div class="t" style="left:1071px;top:744px;font-size:10.5px;letter-spacing:0.2px">Default User</div>
<div class="a" style="left:1205px;top:741px;width:75px;height:15px;border-top:1px solid #808080;border-left:1px solid #808080;border-bottom:1px solid #fff"></div>
<div class="t" style="left:1208px;top:744px;font-size:10.5px;letter-spacing:0.2px">DLC 3</div>
<div class="a" style="left:1254px;top:744px;width:9px;height:9px;border-radius:50%;background:#00f000"></div>
<!-- taskbar -->
<div class="hl" style="left:0;top:757px;width:1280px;background:#fff"></div>
<!--TASK-->
<div class="a" style="left:2px;top:760px;width:50px;height:38px;background:#d4d0c8;border-top:1px solid #fff;border-left:1px solid #fff;border-right:2px solid #404040;border-bottom:2px solid #404040"></div>
<svg class="a" style="left:4px;top:771px" width="16" height="14" viewBox="0 0 16 14">
<path d="M3 1.5C5 0 7 0.5 7.8 1.2L6.8 6.3C5.5 5.5 3.8 5.3 2 6.5Z" fill="#e8502a"/>
<path d="M8.8 1.5C10.5 2.5 12.5 2.5 15 1.5L14 6.5C12 7.5 10 7.2 7.8 6.5Z" fill="#6ab43c"/>
<path d="M1.8 7.5C3.5 6.3 5.3 6.5 6.6 7.3L5.6 12.5C4 11.5 2.5 11.6 0.5 12.7Z" fill="#3a8fd8"/>
<path d="M7.6 7.5C9.8 8.3 11.6 8.5 13.8 7.5L12.8 12.5C10.5 13.6 8.5 13.3 6.6 12.5Z" fill="#f6b81c"/>
</svg>
<div class="t b" style="left:21px;top:773px;font-size:12px">Start</div>
<!-- explorer -->
<svg class="a" style="left:69px;top:766px" width="32" height="30" viewBox="0 0 32 30">
<path d="M1 4H12L14 6H31V27H1Z" fill="#e8d38a" stroke="#c9a850" stroke-width="1"/>
<rect x="4" y="2" width="10" height="4" fill="#fff" stroke="#d8c070" stroke-width="0.6"/>
<rect x="4" y="2" width="2.5" height="1.6" fill="#2cb52c"/>
<rect x="12" y="4" width="10" height="4" fill="#fff" stroke="#d8c070" stroke-width="0.6"/>
<rect x="12" y="4" width="2.5" height="1.6" fill="#d03030"/>
<rect x="20" y="5.5" width="10" height="4" fill="#fff" stroke="#d8c070" stroke-width="0.6"/>
<rect x="20" y="5.5" width="2.5" height="1.6" fill="#2c8fe0"/>
<path d="M1 9H31V27H1Z" fill="#f5e3a0" stroke="#c9a850" stroke-width="1"/>
<path d="M5 15H28V29H23V21H10V29H5Z" fill="#8ccaf0" stroke="#4a9ad8" stroke-width="1"/>
</svg>
<!-- firefox -->
<svg class="a" style="left:120px;top:763px" width="31" height="31" viewBox="0 0 31 31">
<defs><linearGradient id="ffo" x1="0" y1="0" x2="1" y2="0.3"><stop offset="0" stop-color="#e8641c"/><stop offset="0.6" stop-color="#f07a1c"/><stop offset="0.85" stop-color="#ffb000"/><stop offset="1" stop-color="#ffe040"/></linearGradient>
<radialGradient id="ffb" cx="0.45" cy="0.1" r="0.9"><stop offset="0" stop-color="#5cc4f4"/><stop offset="0.5" stop-color="#2a7cc8"/><stop offset="1" stop-color="#0a2a70"/></radialGradient></defs>
<circle cx="15.5" cy="15.8" r="14.8" fill="url(#ffo)"/>
<circle cx="16" cy="13" r="11.8" fill="url(#ffb)"/>
<path d="M2 4L5 6.5C7 5.5 9.5 4.5 11 4.8L10 7.5L13 9.5L10.5 11C9.5 13 10 16 13 17.5C15.5 18.5 19 18 22 16C21 19.5 17.5 22.5 13 22.5C7 22.5 3 18 2.5 12Z" fill="#ee6e1e"/>
<path d="M24 4C27 7 28.5 11 28 15C27.5 19 25 22 22 24L26 22C29 18 30 12 27 7Z" fill="#ffd030"/>
</svg>
<!-- techstream task button pressed -->
<div class="a" style="left:161px;top:760px;width:47px;height:37px;background:#fff;border-top:2px solid #404040;border-left:2px solid #404040;border-right:1px solid #fff;border-bottom:1px solid #fff"></div>
<svg class="a" style="left:169px;top:763px" width="32" height="32" viewBox="0 0 32 32">
<circle cx="16" cy="16" r="13.5" fill="none" stroke="#c4c4c4" stroke-width="4"/>
<path d="M5 24A13.5 13.5 0 0 0 22 28.8" fill="none" stroke="#9a9a9a" stroke-width="4"/>
<path d="M4.5 23A13.5 13.5 0 0 0 12 29" fill="none" stroke="#2a9a9a" stroke-width="1.6"/>
<path d="M18.3 5.5L15 11.5L12.6 12.3L12.4 14.2H14.4L12.4 22.5C11.8 25.5 13.2 26.6 15.5 26.3L18 25.6L18.4 23.4L16.6 23.8C15.6 24 15.4 23.4 15.6 22.5L17.6 14.2H20.6L21.1 12H18.1L19.6 5.5Z" fill="#000080"/>
</svg>
<!-- tray -->
<div class="t" style="left:1020px;top:770px;font-size:12px">EN</div>
<div class="vl" style="left:1040px;top:766px;height:22px;background:#808080"></div>
<div class="vl" style="left:1041px;top:766px;height:22px;background:#fff"></div>
<div class="a" style="left:1044px;top:760px;width:233px;height:38px;border-top:1px solid #808080;border-left:1px solid #808080;border-right:1px solid #fff;border-bottom:1px solid #fff"></div>
<svg class="a" style="left:1049px;top:772px" width="8" height="9"><path d="M1 4L4 1L7 4M1 8L4 5L7 8" fill="none" stroke="#000" stroke-width="1.5"/></svg>
<div class="a" style="left:1067px;top:771px;width:17px;height:17px;border-radius:50%;background:#f39c1a"></div>
<div class="a" style="left:1071px;top:775px;width:9px;height:9px;border-radius:50%;border:2px solid #fff;border-bottom-color:transparent"></div>
<svg class="a" style="left:1090px;top:770px" width="17" height="18" viewBox="0 0 17 18"><rect x="1" y="3" width="9" height="14" rx="1" fill="#fff" stroke="#555" stroke-width="1"/><rect x="4" y="1" width="9" height="14" rx="1" fill="#eee" stroke="#555" stroke-width="1"/><path d="M7 5H14V9C14 11 12 12 10.5 12C9 12 7 11 7 9Z" fill="#fff" stroke="#333" stroke-width="1"/><path d="M9 2V5M12 2V5M10.5 12V16" stroke="#333" stroke-width="1.2"/></svg>
<svg class="a" style="left:1115px;top:770px" width="17" height="17" viewBox="0 0 17 17"><path d="M1.5 6H4L8 2V15L4 11H1.5Z" fill="#f0f0f0" stroke="#555" stroke-width="1"/><path d="M10.5 5.5C11.5 7 11.5 10 10.5 11.5M12.5 3.5C14.5 6 14.5 11 12.5 13.5" fill="none" stroke="#777" stroke-width="1.2"/></svg>
<svg class="a" style="left:1138px;top:770px" width="17" height="17" viewBox="0 0 17 17"><path d="M2 1.5V16" stroke="#555" stroke-width="1.8"/><path d="M3 2C6 1 8 3.5 11 3C13 2.5 15 2.5 16 3.5L14 8C12 8.5 10 9 8 8.5C6 8 4 8 3 8.5Z" fill="#f4f4f4" stroke="#666" stroke-width="1"/></svg>
<svg class="a" style="left:1162px;top:772px" width="18" height="16" viewBox="0 0 18 16"><g fill="#d8d8d8" stroke="#808080" stroke-width="1"><rect x="1.5" y="10.5" width="3" height="3"/><rect x="5.5" y="7.5" width="3" height="6"/><rect x="9.5" y="4.5" width="3" height="9"/><rect x="13.5" y="1.5" width="3" height="12"/></g><path d="M8.5 7.5L15.5 14.5M15.5 7.5L8.5 14.5" stroke="#e01010" stroke-width="1.8"/></svg>
<div class="t" style="left:1190px;top:766px;width:66px;text-align:center;font-size:12px">16:19</div>
<div class="t" style="left:1190px;top:782px;width:66px;text-align:center;font-size:12px">15.1.2017 г.</div>
<svg class="a" style="left:1260px;top:773px" width="16" height="14" viewBox="0 0 16 14"><rect x="0.5" y="0.5" width="15" height="12" fill="#2a6ac8" stroke="#9ab" stroke-width="1"/><rect x="1" y="10" width="14" height="2" fill="#223"/></svg>

<!--/TASK-->
</body></html>
